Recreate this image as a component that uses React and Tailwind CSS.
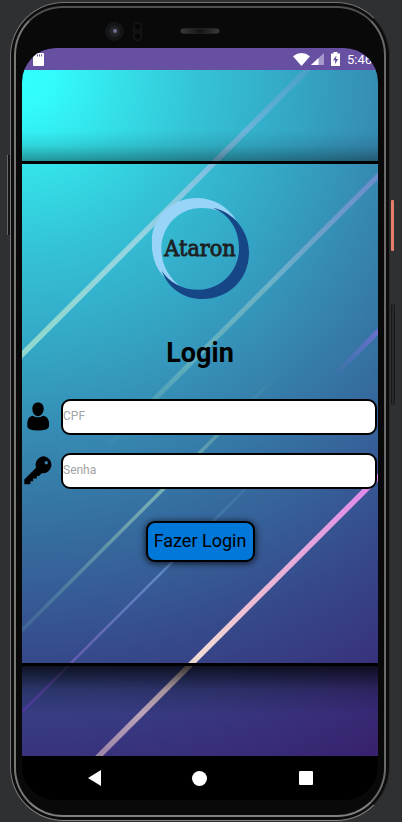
import React from "react";

function Artwork() {
  return (
    <svg className="absolute inset-0 h-full w-full" viewBox="22 70 356 687" preserveAspectRatio="none">
      <defs>
        <radialGradient id="sky" gradientUnits="userSpaceOnUse" cx="22" cy="75" r="774">
          <stop offset="0" stopColor="#32ffff" />
          <stop offset="0.04" stopColor="#32fbfd" />
          <stop offset="0.12" stopColor="#34e2ea" />
          <stop offset="0.23" stopColor="#34c2d6" />
          <stop offset="0.36" stopColor="#34a5c5" />
          <stop offset="0.465" stopColor="#368bb3" />
          <stop offset="0.555" stopColor="#3576a5" />
          <stop offset="0.645" stopColor="#36629a" />
          <stop offset="0.76" stopColor="#36498a" />
          <stop offset="0.89" stopColor="#38317c" />
          <stop offset="1" stopColor="#38206d" />
        </radialGradient>
        <linearGradient id="rayA" gradientUnits="userSpaceOnUse" x1="22" y1="355" x2="308" y2="69">
          <stop offset="0" stopColor="#90d8cc" />
          <stop offset="0.4" stopColor="#94d4e2" />
          <stop offset="0.7" stopColor="#7abce0" />
          <stop offset="1" stopColor="#5aa0cc" stopOpacity="0.6" />
        </linearGradient>
        <linearGradient id="rayB" gradientUnits="userSpaceOnUse" x1="105" y1="449" x2="378" y2="176">
          <stop offset="0" stopColor="#68b0b8" stopOpacity="0" />
          <stop offset="0.3" stopColor="#68b4bc" stopOpacity="0.8" />
          <stop offset="0.6" stopColor="#6cb2c8" />
          <stop offset="1" stopColor="#6b8ccc" />
        </linearGradient>
        <linearGradient id="rayC" gradientUnits="userSpaceOnUse" x1="333" y1="377" x2="378" y2="332">
          <stop offset="0" stopColor="#6870c8" stopOpacity="0" />
          <stop offset="1" stopColor="#6870cc" />
        </linearGradient>
        <linearGradient id="rayD" gradientUnits="userSpaceOnUse" x1="22" y1="631" x2="280" y2="373">
          <stop offset="0" stopColor="#5080a0" stopOpacity="0.4" />
          <stop offset="0.4" stopColor="#6ca0ac" />
          <stop offset="0.55" stopColor="#78b0b4" />
          <stop offset="0.78" stopColor="#60a0ac" stopOpacity="0.7" />
          <stop offset="1" stopColor="#5090b0" stopOpacity="0" />
        </linearGradient>
        <linearGradient id="rayE" gradientUnits="userSpaceOnUse" x1="22" y1="712" x2="250" y2="484">
          <stop offset="0" stopColor="#5138a6" />
          <stop offset="0.25" stopColor="#6460b4" />
          <stop offset="0.6" stopColor="#6088c4" />
          <stop offset="1" stopColor="#5090b8" stopOpacity="0.2" />
        </linearGradient>
        <linearGradient id="rayF" gradientUnits="userSpaceOnUse" x1="98" y1="757" x2="378" y2="477">
          <stop offset="0" stopColor="#9a84a8" />
          <stop offset="0.18" stopColor="#c0a8bc" />
          <stop offset="0.36" stopColor="#f0dcd4" />
          <stop offset="0.55" stopColor="#ecbcd2" />
          <stop offset="0.8" stopColor="#e2a0e0" />
          <stop offset="1" stopColor="#e084ea" />
        </linearGradient>
      </defs>
      <rect x="22" y="70" width="356" height="687" fill="url(#sky)" />
      <path d="M12 365 L318 59" stroke="url(#rayA)" strokeWidth="5.5" />
      <path d="M105 449 L388 166" stroke="url(#rayB)" strokeWidth="5" />
      <path d="M333 377 L388 322" stroke="url(#rayC)" strokeWidth="5" />
      <path d="M12 641 L280 373" stroke="url(#rayD)" strokeWidth="3.5" />
      <path d="M12 723 L250 485" stroke="url(#rayE)" strokeWidth="2.5" />
      <path d="M88 768 L388 468" stroke="url(#rayF)" strokeWidth="5.5" />
    </svg>
  );
}

function StatusBar() {
  return (
    <header className="flex h-[22px] shrink-0 items-center bg-[#6750a2] pl-[11px]">
      <svg className="h-[13px] w-[11px]" viewBox="0 0 11 13">
        <path d="M3 0h7q1 0 1 1v11q0 1-1 1H1q-1 0-1-1V3z" fill="#fff" />
        <path d="M4.5 1.5v2M6.5 1.5v2M8.5 1.5v2" stroke="#6750a2" />
      </svg>
      <div className="ml-auto flex items-center">
        <svg className="h-[13px] w-[17px]" viewBox="0 0 17 13">
          <path d="M0 3.2Q8.5-3 17 3.2L8.5 13z" fill="#fff" />
        </svg>
        <svg className="ml-px h-[12px] w-[13px]" viewBox="0 0 13 12">
          <path d="M0 12L13 0V12z" fill="#a598cb" />
          <path d="M0 12L7.5 5V12z" fill="#fff" />
        </svg>
        <svg className="ml-[7px] h-[14px] w-[9px]" viewBox="0 0 9 14">
          <path d="M2.5 0h4v1.5H9V14H0V1.5h2.5z" fill="#fff" />
          <path d="M5.4 3.5L2 8.2h2.1V12L7.2 7H5.1z" fill="#6750a2" />
        </svg>
        <span className="ml-[7px] w-[31px] text-[13px] leading-none text-white">5:46</span>
      </div>
    </header>
  );
}

function Logo() {
  return (
    <svg className="h-[102px] w-[98px] translate-x-[0.7px]" viewBox="65 54 294 306">
      <path d="M320 122C290 76 248 54 200 54C122 54 65 115 65 185C65 262 100 302 152 320C115 292 94 252 94 207C94 140 145 84 215 84C255 84 290 98 320 122Z" fill="#98d3f8" />
      <path d="M250 84C307 95 357 150 357 217C357 297 297 357 218 357C160 357 115 325 95 272C117 308 160 331 210 329C275 327 327 272 327 205C327 150 300 105 250 84Z" fill="#174687" />
      <text x="103" y="228" fontFamily="'DejaVu Serif', serif" fontSize="65" textLength="214" lengthAdjust="spacingAndGlyphs" fill="#1c2123" stroke="#1c2123" strokeWidth="2.6">Ataron</text>
    </svg>
  );
}

function PersonIcon() {
  return (
    <svg className="h-[29px] w-[22px]" viewBox="80 52 66 86">
      <path d="M113 53C124 53 130 60 130 72C130 85 122 94 113 94C104 94 96 85 96 72C96 60 102 53 113 53Z" />
      <path d="M97 93Q113 102 129 93Q143 96 146 112V124Q146 131 137 134Q113 140 89 134Q81 131 81 124V112Q83 96 97 93Z" />
    </svg>
  );
}

function KeyIcon() {
  return (
    <svg className="h-[29px] w-[29px]" viewBox="71 215 86 86">
      <path fillRule="evenodd" d="M131 216A25 25 0 1 1 123 266L116 274H109V282H98V290H90V299H72V285L107 250A25 25 0 0 1 131 216ZM137 230A5 5 0 1 0 137 240A5 5 0 1 0 137 230Z" />
    </svg>
  );
}

function Field({ icon, label }) {
  return (
    <div className="flex h-[36px] items-center">
      <div className="flex w-[39px] shrink-0 items-center justify-start pb-px">{icon}</div>
      <input
        placeholder={label}
        className="h-[36px] w-[316px] rounded-[9px] border-2 border-black bg-white pb-[3px] text-[12px] text-black outline-none placeholder:text-[#a3a3a3]"
      />
    </div>
  );
}

function Screen() {
  return (
    <div className="flex h-[752px] w-[356px] flex-col overflow-hidden rounded-[34px] bg-black">
      <StatusBar />
      <main className="relative h-[686px] shrink-0 overflow-hidden">
        <Artwork />
        <div className="relative flex h-full flex-col">
          <div className="flex h-[91px] flex-col justify-end">
            <div className="h-[30px] bg-gradient-to-b from-transparent via-black/10 to-black/35" />
          </div>
          <section className="flex h-[505px] flex-col items-center border-y-[3px] border-black pt-[34px]">
            <Logo />
            <h1 className="mt-[37px] text-[27px] font-bold leading-[32px] text-black">Login</h1>
            <form className="mt-[30px] flex w-full flex-col gap-[18px]">
              <Field label="CPF" icon={<span className="ml-[5px]"><PersonIcon /></span>} />
              <Field label="Senha" icon={<span className="ml-[2px]"><KeyIcon /></span>} />
            </form>
            <button className="mt-[31.5px] h-[41px] w-[109px] whitespace-nowrap rounded-[9px] border-[2px] border-black bg-[#0078d9] text-[18px] leading-none text-black shadow-[0_1px_6px_1px_rgba(0,0,0,0.65)]">
              Fazer Login
            </button>
          </section>
          <div className="h-[48px] bg-gradient-to-b from-black/75 via-black/20 to-transparent" />
        </div>
      </main>
      <nav className="flex h-[44px] shrink-0 items-center bg-black pl-[66px]">
        <svg className="h-[16px] w-[13px]" viewBox="0 0 13 16"><path d="M0 8L13 0V16z" fill="#fff" /></svg>
        <span className="ml-[91px] size-[15px] rounded-full bg-white" />
        <span className="ml-[92px] size-[14px] rounded-[1px] bg-white" />
      </nav>
    </div>
  );
}

function PhoneTop() {
  return (
    <div className="flex h-[40px] w-full items-center pb-[1px] pl-[89px] pt-[7px]">
      <span className="flex size-[19px] items-center justify-center rounded-full bg-[#141516]">
        <span className="flex size-[11px] items-center justify-center rounded-full bg-[#222327]">
          <span className="size-[4px] rounded-full bg-[#6c6f91]" />
        </span>
      </span>
      <span className="ml-[9px] flex h-[19px] w-[9px] flex-col items-center justify-between rounded-[4px] border border-[#141516] bg-[#101112] p-px">
        <span className="size-[5px] rounded-full bg-[#060606]" />
        <span className="size-[5px] rounded-full bg-[#060606]" />
      </span>
      <span className="ml-[38px] h-[6px] w-[40px] rounded-[3px] border border-[#222222] bg-gradient-to-r from-[#3a3a3a] via-[#151515] to-[#3a3a3a]" />
    </div>
  );
}

export default function App() {
  return (
    <div className="flex h-[822px] w-[402px] overflow-hidden bg-[#2f3032] font-['Roboto',sans-serif]">
      <div className="flex w-[10px] shrink-0 flex-col items-end pt-[155px]">
        <span className="h-[80px] w-[3px] border-l border-[#68696a] bg-[#161616]" />
      </div>
      <div className="mt-[2px] h-[819px] w-[380px] shrink-0 rounded-[54px] border border-b-[#858585] border-l-[#787878] border-r-[#29292a] border-t-[#747474] bg-[#0c0c0d] p-[3px]">
        <div className="flex h-[811px] w-[372px] flex-col items-center rounded-[49px] border-2 border-b-[#808080] border-l-[#777773] border-r-[#6b6b6b] border-t-[#51504f] bg-[#09090a]">
          <PhoneTop />
          <Screen />
        </div>
      </div>
      <div className="flex w-[12px] shrink-0 flex-col pl-px pt-[200px]">
        <span className="h-[51px] w-[3px] rounded-[1px] bg-[#e57e66]" />
        <span className="mt-[53px] h-[101px] w-[4px] rounded-[2px] border-x border-[#171819] bg-[#28292a]" />
      </div>
    </div>
  );
}
